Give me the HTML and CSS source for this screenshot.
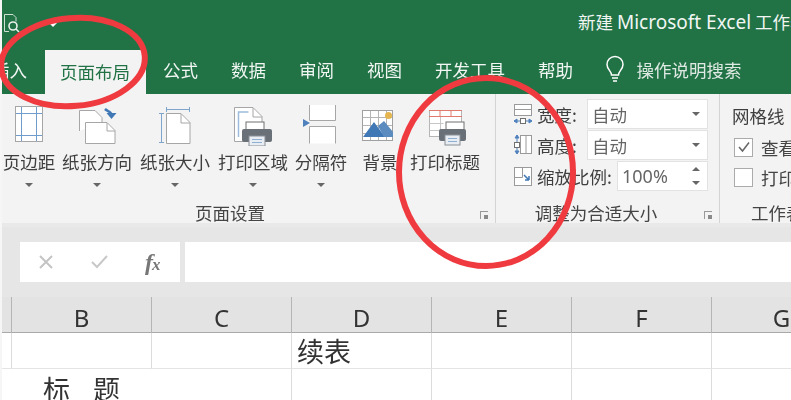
FILE: index.html
```html
<!DOCTYPE html>
<html lang="zh-CN">
<head>
<meta charset="utf-8">
<title>新建 Microsoft Excel 工作表</title>
<link rel="stylesheet" href="styles.css">
</head>
<body>
<div class="page">
  <div class="soft">
    <header class="titlebar">
      <div class="qat">
        <svg class="qat-icon" width="18" height="20" viewBox="0 0 18 20"><path d="M1.500 18.500V1.500H10l3 3v4M1.500 18.500H6" fill="none" stroke="#cfe0d5" stroke-width="1"/><circle cx="10" cy="13" r="4" fill="none" stroke="#e9f1ec" stroke-width="1.600"/><path d="M13 16l3 3" stroke="#e9f1ec" stroke-width="1.600"/></svg>
        <span class="qat-caret"></span>
      </div>
      <div class="doc-title">新建 <span class="latin">Microsoft Excel</span> 工作表</div>
    </header>
    <nav class="tabs">
      <span class="tab">插入</span>
      <span class="tab active">页面布局</span>
      <span class="tab">公式</span>
      <span class="tab">数据</span>
      <span class="tab">审阅</span>
      <span class="tab">视图</span>
      <span class="tab">开发工具</span>
      <span class="tab">帮助</span>
      <span class="tell">
        <svg width="22" height="28" viewBox="0 0 22 28"><path d="M7.500 20c0-4-4.500-5.500-4.500-10.500a8 8 0 0 1 16 0C19 14.500 14.500 16 14.500 20z" fill="none" stroke="#fff" stroke-width="1.500"/><path d="M8 23h6M9 26h4" stroke="#fff" stroke-width="1.500"/></svg>
        <span>操作说明搜索</span>
      </span>
    </nav>
    <section class="ribbon">
      <div class="group group-page">
        <div class="group-body">
          <div class="rbtn w58">
            <svg class="ico" width="58" height="44" viewBox="0 0 58 44"><rect x="15.500" y="4.500" width="27" height="35" fill="#fff" stroke="#a6a6a6"/><path d="M21.500 5v34M36.500 5v34M16 11.500h26M16 33.500h26" stroke="#6f9ccb" fill="none"/></svg>
            <span class="lbl">页边距</span><span class="caret"></span>
          </div>
          <div class="rbtn w78">
            <svg class="ico" width="78" height="44" viewBox="0 0 78 44"><path d="M21.500 29V8.500H37l7 7V20" fill="#fff" stroke="#a6a6a6"/><path d="M27.500 41.500V20.500H49l8 8v13z" fill="#fff" stroke="#a6a6a6"/><path d="M49 21v8h8" fill="none" stroke="#a6a6a6"/><path d="M47 7c2 2 5 2 6.500 5" fill="none" stroke="#3f78b5" stroke-width="2.500"/><path d="M48.500 11h10l-5 6z" fill="#3f78b5"/></svg>
            <span class="lbl">纸张方向</span><span class="caret"></span>
          </div>
          <div class="rbtn w78">
            <svg class="ico" width="78" height="44" viewBox="0 0 78 44"><path d="M30.500 41.500V11.500H45l9 9v21z" fill="#fff" stroke="#a6a6a6"/><path d="M45 12v9h9" fill="none" stroke="#a6a6a6"/><path d="M30 7.500h24M30.500 5v5M53.500 5v5M25.500 11v30M23 11.500h5M23 40.500h5" fill="none" stroke="#7fa5cd"/></svg>
            <span class="lbl">纸张大小</span><span class="caret"></span>
          </div>
          <div class="rbtn w78">
            <svg class="ico" width="78" height="44" viewBox="0 0 78 44"><path d="M20.500 39.500V5.500H39l9 9v25z" fill="#fff" stroke="#a6a6a6"/><path d="M39 6v9h9" fill="none" stroke="#a6a6a6"/><path d="M24.500 35V10h10" fill="none" stroke="#9dbcdc" stroke-width="1.500"/><rect x="32" y="20" width="18" height="9" fill="#fff" stroke="#707070"/><rect x="28" y="27" width="30" height="13" rx="2" fill="#6a7078"/><rect x="35" y="34" width="16" height="10" fill="#e7edf3" stroke="#8a8f95"/><path d="M38 37.500h10M38 40.500h10" stroke="#8fb0d0"/></svg>
            <span class="lbl">打印区域</span><span class="caret"></span>
          </div>
          <div class="rbtn w58">
            <svg class="ico" width="58" height="44" viewBox="0 0 58 44"><path d="M17.500 3v15.500h26V3" fill="#fff" stroke="#a6a6a6"/><path d="M17.500 41.500V24.500h26v17" fill="#fff" stroke="#a6a6a6"/><path d="M11 17l7 4-7 4z" fill="#4f81bd"/></svg>
            <span class="lbl">分隔符</span><span class="caret"></span>
          </div>
          <div class="rbtn w60">
            <svg class="ico" width="60" height="44" viewBox="0 0 60 44"><rect x="12.500" y="8.500" width="30" height="30" fill="#fff" stroke="#a0a0a0"/><path d="M20.500 9v29M28.500 9v29M36.500 9v29M13 15.500h29M13 23.500h29M13 31.500h29" stroke="#b5b5b5"/><circle cx="38.500" cy="13.500" r="3.500" fill="#e5b64f"/><path d="M13 35l11-15 11 15z" fill="#3f78b5"/><path d="M28 24l6-5 9 11v5h-9z" fill="#5b8bbf"/></svg>
            <span class="lbl">背景</span>
          </div>
          <div class="rbtn w70">
            <svg class="ico" width="70" height="44" viewBox="0 0 70 44"><rect x="19.500" y="8.500" width="32" height="26" fill="#fff" stroke="#b5b5b5"/><path d="M19 8.500h33M19 14.500h33M30 9v6M41 9v6" stroke="#e07a6c"/><path d="M19.500 21.500h14M19.500 28.500h10M30.500 15v19" stroke="#c6c6c6"/><rect x="36" y="20" width="18" height="9" fill="#fff" stroke="#707070"/><rect x="29" y="27" width="27" height="12" rx="2" fill="#6a7078"/><rect x="35" y="33" width="15" height="10" fill="#e7edf3" stroke="#8a8f95"/><path d="M38 36.500h9M38 39.500h9" stroke="#8fb0d0"/></svg>
            <span class="lbl">打印标题</span>
          </div>
        </div>
        <div class="group-label label-page">页面设置</div>
        <span class="launcher"></span>
      </div>
      <div class="group group-fit">
        <div class="fit-rows">
          <div class="fit-row">
            <svg width="20" height="22" viewBox="0 0 20 22"><rect x="1.500" y="1.500" width="17" height="11" fill="#fff" stroke="#9a9a9a"/><path d="M2 6.500h16" stroke="#9a9a9a"/><path d="M1 18h18M1 18l3-2v4zM19 18l-3-2v4z" fill="#4f81bd" stroke="#4f81bd"/><rect x="7.500" y="15.500" width="5" height="5" fill="#fff" stroke="#707070"/></svg>
            <span class="fit-label">宽度:</span>
            <span class="select"><span>自动</span><i class="sel-caret"></i></span>
          </div>
          <div class="fit-row">
            <svg width="20" height="22" viewBox="0 0 20 22"><rect x="7.500" y="1.500" width="11" height="18" fill="#fff" stroke="#9a9a9a"/><path d="M13 2v17" stroke="#9a9a9a"/><path d="M4 1v19M4 1L2 4h4zM4 20l-2-3h4z" fill="#4f81bd" stroke="#4f81bd"/><rect x="1.500" y="8.500" width="5" height="5" fill="#fff" stroke="#707070"/></svg>
            <span class="fit-label">高度:</span>
            <span class="select"><span>自动</span><i class="sel-caret"></i></span>
          </div>
          <div class="fit-row">
            <svg width="20" height="22" viewBox="0 0 20 22"><rect x="1.500" y="2.500" width="17" height="18" fill="#fff" stroke="#9a9a9a"/><path d="M1.500 12.500h8v-10" fill="none" stroke="#9a9a9a"/><path d="M11 10l5 5M16 15h-4M16 15v-4" stroke="#3f78b5" stroke-width="1.500" fill="none"/></svg>
            <span class="fit-label wide">缩放比例:</span>
            <span class="spin"><span>100%</span><i class="spin-arrows"><b class="up"></b><b class="down"></b></i></span>
          </div>
        </div>
        <div class="group-label label-fit">调整为合适大小</div>
        <span class="launcher"></span>
      </div>
      <div class="group group-sheet">
        <div class="sheet-body">
          <div class="sheet-title">网格线</div>
          <div class="check-row"><span class="check"><svg width="16" height="16" viewBox="0 0 16 16"><path d="M3 8l3.500 4L13 3.500" fill="none" stroke="#666" stroke-width="1.500"/></svg></span><span>查看</span></div>
          <div class="check-row"><span class="check"></span><span>打印</span></div>
        </div>
        <div class="group-label label-sheet">工作表选项</div>
      </div>
    </section>
    <section class="formula">
      <div class="fx-box">
        <svg width="14" height="14" viewBox="0 0 14 14"><path d="M1 1l12 12M13 1L1 13" stroke="#c4c4c4" stroke-width="2"/></svg>
        <svg width="17" height="14" viewBox="0 0 17 14"><path d="M1 7l5 5L16 1" fill="none" stroke="#c8c8c8" stroke-width="2"/></svg>
        <span class="fx"><i>f</i><i class="x">x</i></span>
      </div>
      <div class="fx-input"></div>
    </section>
    <div class="col-heads">
      <span class="corner"></span>
      <span class="col">B</span><span class="col">C</span><span class="col">D</span><span class="col">E</span><span class="col">F</span><span class="col">G</span>
    </div>
    <div class="cells">
      <span class="cell"></span><span class="cell"></span><span class="cell"></span>
      <span class="cell txt">续表</span><span class="cell"></span><span class="cell"></span><span class="cell"></span>
      <span class="cell merged"><span>标</span><span>题</span></span>
      <span class="cell"></span><span class="cell"></span><span class="cell"></span><span class="cell"></span>
    </div>
  </div>
  <svg class="marks" width="791" height="400" viewBox="0 0 791 400">
    <ellipse cx="73" cy="62" rx="72" ry="44" transform="rotate(-5 73 62)" fill="none" stroke="#ef3b40" stroke-width="6"/>
    <ellipse cx="486" cy="172" rx="87" ry="94" fill="none" stroke="#ef3b40" stroke-width="6"/>
  </svg>
</div>
</body>
</html>
```
FILE: styles.css
```css
* { box-sizing: border-box; }
html, body { margin: 0; padding: 0; }
body { background: #fff; }
.page {
  position: relative;
  width: 791px;
  height: 400px;
  overflow: hidden;
  font-family: "Noto Sans CJK SC", "Noto Sans", sans-serif;
  color: #444;
}
.page::before {
  content: "";
  position: absolute;
  left: 0;
  top: 0;
  bottom: 0;
  width: 2px;
  background: #f6f6f6;
  z-index: 1;
}
.soft { filter: blur(0.6px); }
.marks { position: absolute; left: 0; top: 0; z-index: 2; filter: blur(0.4px); }

.titlebar {
  height: 50px;
  background: #217346;
  display: flex;
  justify-content: space-between;
  white-space: nowrap;
  overflow: hidden;
}
.qat { display: flex; align-items: flex-start; padding: 13px 0 0 3px; gap: 28px; width: 578px; }
.qat-caret {
  margin-top: 10px;
  border-left: 4px solid transparent;
  border-right: 4px solid transparent;
  border-top: 4px solid #fff;
}
.doc-title { flex: none; width: 213px; overflow: hidden; color: #f1f6f3; font-size: 17.5px; line-height: 44px; }
.latin { font-family: "Noto Sans", sans-serif; font-size: 19px; }

.tabs {
  height: 44px;
  background: #217346;
  display: flex;
  gap: 2px;
  margin-left: -23.5px;
  font-size: 17.5px;
  color: #f1f6f3;
  white-space: nowrap;
}
.tab { padding: 0 15.5px; line-height: 40px; }
.tab.active { background: #f3f3f3; color: #217346; line-height: 44px; }
.tell { display: flex; align-items: center; gap: 11px; margin-left: 13px; height: 38px; color: #dfe9e3; }
.tell svg { flex: none; }

.ribbon { height: 129px; background: #f3f3f3; display: flex; }
.group { position: relative; flex: none; height: 129px; display: flex; flex-direction: column; border-right: 1px solid #d4d4d4; }
.group-page { width: 496px; }
.group-fit { width: 224px; }
.group-sheet { width: 71px; border-right: 0; }
.group-body { display: flex; height: 109px; }
.group-label { font-size: 17.5px; line-height: 20px; color: #444; text-align: center; white-space: nowrap; }
.label-page { padding-right: 35px; }
.label-fit { padding-right: 23px; }
.label-sheet { text-align: left; padding-left: 31px; }
.launcher {
  position: absolute;
  right: 7px;
  bottom: 4px;
  width: 8px;
  height: 8px;
  border-left: 1px solid #999;
  border-top: 1px solid #999;
}
.launcher::after {
  content: "";
  position: absolute;
  right: 0;
  bottom: 0;
  width: 4px;
  height: 4px;
  background: #8a8a8a;
}
.rbtn { flex: none; display: flex; flex-direction: column; align-items: center; padding-top: 8px; }
.w58 { width: 58px; }
.w60 { width: 60px; }
.w70 { width: 70px; }
.w78 { width: 78px; }
.ico { flex: none; display: block; }
.lbl { font-size: 17.5px; line-height: 20px; margin-top: 6px; white-space: nowrap; color: #3f3f3f; }
.caret {
  margin-top: 11px;
  border-left: 4px solid transparent;
  border-right: 4px solid transparent;
  border-top: 4px solid #666;
}

.fit-rows { padding: 5px 10px 0 17px; height: 109px; display: flex; flex-direction: column; gap: 1px; }
.fit-row { display: flex; align-items: center; height: 30px; font-size: 17.5px; }
.fit-row svg { flex: none; }
.fit-label { width: 50px; margin-left: 4px; white-space: nowrap; color: #3f3f3f; }
.fit-label.wide { width: 80px; }
.select, .spin {
  display: flex;
  align-items: center;
  justify-content: space-between;
  height: 30px;
  background: #fff;
  border: 1px solid #e2e2e2;
  padding: 0 7px 0 4px;
  color: #666;
}
.select { width: 121px; }
.spin { width: 91px; font-family: "Noto Sans", sans-serif; font-size: 18px; }
.sel-caret {
  border-left: 4px solid transparent;
  border-right: 4px solid transparent;
  border-top: 4px solid #666;
}
.spin-arrows { display: flex; flex-direction: column; gap: 10px; }
.spin-arrows b { display: block; border-left: 4px solid transparent; border-right: 4px solid transparent; }
.spin-arrows .up { border-bottom: 4px solid #666; }
.spin-arrows .down { border-top: 4px solid #666; }

.sheet-body { height: 109px; padding: 11px 0 0 12px; font-size: 17.5px; white-space: nowrap; overflow: hidden; }
.sheet-title { line-height: 22px; margin-bottom: 5px; color: #3f3f3f; }
.check-row { display: flex; align-items: center; height: 30px; gap: 8px; padding-left: 2px; }
.check {
  flex: none;
  width: 19px;
  height: 19px;
  background: #fff;
  border: 1px solid #ababab;
  display: flex;
  align-items: center;
  justify-content: center;
}

.formula {
  height: 74px;
  background: #e6e6e6;
  display: flex;
  gap: 5px;
  padding: 15px 0 15px 20px;
  border-top: 4px solid #e9e9e9;
}
.fx-box {
  flex: none;
  width: 160px;
  background: #fff;
  display: flex;
  align-items: center;
  gap: 38px;
  padding-left: 19px;
}
.fx { font-family: "Liberation Serif", serif; font-size: 24px; font-weight: 700; color: #777; letter-spacing: -1px; margin-left: -1px; }
.fx .x { font-size: 17px; }
.fx-input { flex: 1; background: #fff; }

.col-heads {
  height: 36px;
  background: #e3e3e3;
  display: grid;
  grid-template-columns: 12px repeat(6, 140px);
  border-bottom: 1px solid #a9a9a9;
  font-family: "Noto Sans", sans-serif;
}
.corner { border-right: 1px solid #b5b5b5; }
.col {
  border-right: 1px solid #b5b5b5;
  text-align: center;
  font-size: 24px;
  line-height: 41px;
  color: #333;
}

.cells {
  display: grid;
  grid-template-columns: 12px repeat(6, 140px);
  grid-auto-rows: 36px;
  font-size: 27px;
  color: #333;
}
.cell { border-right: 1px solid #dcdcdc; border-bottom: 1px solid #e4e4e4; line-height: 36px; white-space: nowrap; }
.txt { padding-left: 5px; }
.merged { grid-column: 1 / span 3; display: flex; gap: 23px; padding-left: 43px; border-bottom: 0; line-height: 40px; }
```
